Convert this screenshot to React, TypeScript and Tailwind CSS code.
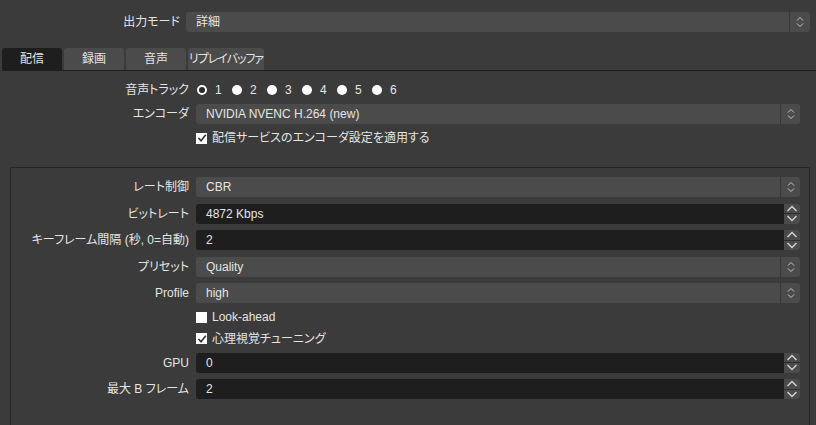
import React from "react";

const font = { fontFamily: '"Liberation Sans", "Noto Sans CJK JP", sans-serif' };

function ComboArrows() {
  return (
    <svg width="8" height="12" viewBox="0 0 8 12" fill="none" stroke="#c8c8c8" strokeWidth="1">
      <path d="M1 4.5 L4 1.5 L7 4.5" />
      <path d="M1 7.5 L4 10.5 L7 7.5" />
    </svg>
  );
}

function Combo({ value, wide }: { value: string; wide?: boolean }) {
  return (
    <div className="flex h-5 flex-1 items-stretch overflow-hidden rounded-[3px] bg-[#4b4b4b]">
      <div className="flex flex-1 items-center pl-[10px] text-[12px] text-[#e4e4e4]">{value}</div>
      <div className={`flex items-center justify-center border-l border-[#383838] ${wide ? "w-[21px]" : "w-[20px]"}`}>
        <ComboArrows />
      </div>
    </div>
  );
}

function Spin({ value }: { value: string }) {
  return (
    <div className="flex h-5 flex-1 items-stretch">
      <div className="flex flex-1 items-center rounded-l-[3px] bg-[#1e1e1e] pl-[10px] text-[12px] text-[#e4e4e4]">{value}</div>
      <div className="flex w-4 flex-col gap-px overflow-hidden rounded-r-[3px] bg-[#2e2e2e]">
        <div className="flex flex-1 items-center justify-center bg-[#4b4b4b]">
          <svg width="12" height="7" viewBox="0 0 12 7" fill="none" stroke="#d0d0d0" strokeWidth="1.5">
            <path d="M1.5 6 L6 1.5 L10.5 6" />
          </svg>
        </div>
        <div className="flex flex-1 items-center justify-center bg-[#4b4b4b]">
          <svg width="12" height="7" viewBox="0 0 12 7" fill="none" stroke="#d0d0d0" strokeWidth="1.5">
            <path d="M1.5 1 L6 5.5 L10.5 1" />
          </svg>
        </div>
      </div>
    </div>
  );
}

function Check({ label, checked }: { label: string; checked?: boolean }) {
  return (
    <div className="flex items-center gap-[5px] text-[12px] text-[#e4e4e4]">
      <div className="flex h-[11px] w-[11px] items-center justify-center bg-white">
        {checked && (
          <svg width="10" height="10" viewBox="0 0 10 10" fill="none" stroke="#333" strokeWidth="1.6">
            <path d="M1.5 5 L4 7.8 L8.8 1.8" />
          </svg>
        )}
      </div>
      <span>{label}</span>
    </div>
  );
}

function Row({ label, children, h = "h-5", w = "w-[186px]" }: { label: string; children: React.ReactNode; h?: string; w?: string }) {
  return (
    <div className={`flex items-center ${h}`}>
      <div className={`${w} shrink-0 whitespace-nowrap pr-[7px] text-right text-[12px] text-[#e4e4e4]`}>{label}</div>
      <div className="flex flex-1 items-center">{children}</div>
    </div>
  );
}

export default function App() {
  const tabs = ["配信", "録画", "音声", "リプレイバッファ"];
  return (
    <div className="h-[425px] w-[816px] overflow-hidden bg-[#3b3b3b] [font-feature-settings:'palt']" style={font}>
      <div className="mt-[12px] flex h-5 items-center pr-[6px]">
        <div className="w-[186px] shrink-0 pr-[6px] text-right text-[12px] text-[#e4e4e4]">出力モード</div>
        <Combo value="詳細" wide />
      </div>

      <div className="mt-4 ml-[2px] flex gap-[2px] border-b border-[#1e1e1e]">
        {tabs.map((t, i) => (
          <div
            key={t}
            className={`flex h-[22px] items-center justify-center whitespace-nowrap rounded-t-[3px] text-[12px] text-[#e4e4e4] ${
              i === 0 ? "w-[60px] bg-[#1e1e1e]" : i === 3 ? "w-[76px] bg-[#4b4b4b] tracking-[-1px]" : "w-[60px] bg-[#4b4b4b]"
            }`}
          >
            {t}
          </div>
        ))}
      </div>

      <div className="pl-[10px] pr-[16px]">
        <div className="mt-[9px]">
          <Row label="音声トラック">
            <div className="flex items-center gap-[10px] pl-[1px] text-[12px] text-[#e4e4e4]">
              {[1, 2, 3, 4, 5, 6].map((n) => (
                <div key={n} className="flex items-center gap-[8px]">
                  {n === 1 ? (
                    <div className="h-[10px] w-[10px] rounded-full border-[2px] border-white bg-[#2a2a2a]" />
                  ) : (
                    <div className="h-[10px] w-[10px] rounded-full bg-white" />
                  )}
                  <span className="w-[7px]">{n}</span>
                </div>
              ))}
            </div>
          </Row>
        </div>
        <div className="mt-1">
          <Row label="エンコーダ">
            <Combo value="NVIDIA NVENC H.264 (new)" />
          </Row>
        </div>
        <div className="mt-[6px] flex h-4 items-center pl-[186px]">
          <Check label="配信サービスのエンコーダ設定を適用する" checked />
        </div>
      </div>

      <div className="ml-[10px] mr-[6px] mt-[21px] h-[300px] border border-[#262626] pt-[9px] pr-[9px]">
        <div className="flex flex-col gap-[6.5px]">
          <Row label="レート制御" w="w-[185px]">
            <Combo value="CBR" />
          </Row>
          <Row label="ビットレート" w="w-[185px]">
            <Spin value="4872 Kbps" />
          </Row>
          <Row label="キーフレーム間隔 (秒, 0=自動)" w="w-[185px]">
            <Spin value="2" />
          </Row>
          <Row label="プリセット" w="w-[185px]">
            <Combo value="Quality" />
          </Row>
          <Row label="Profile" w="w-[185px]">
            <Combo value="high" />
          </Row>
          <Row label="" h="h-[15px]" w="w-[185px]">
            <Check label="Look-ahead" />
          </Row>
          <Row label="" h="h-[15px]" w="w-[185px]">
            <Check label="心理視覚チューニング" checked />
          </Row>
          <Row label="GPU" w="w-[185px]">
            <Spin value="0" />
          </Row>
          <Row label="最大 B フレーム" w="w-[185px]">
            <Spin value="2" />
          </Row>
        </div>
      </div>
    </div>
  );
}
